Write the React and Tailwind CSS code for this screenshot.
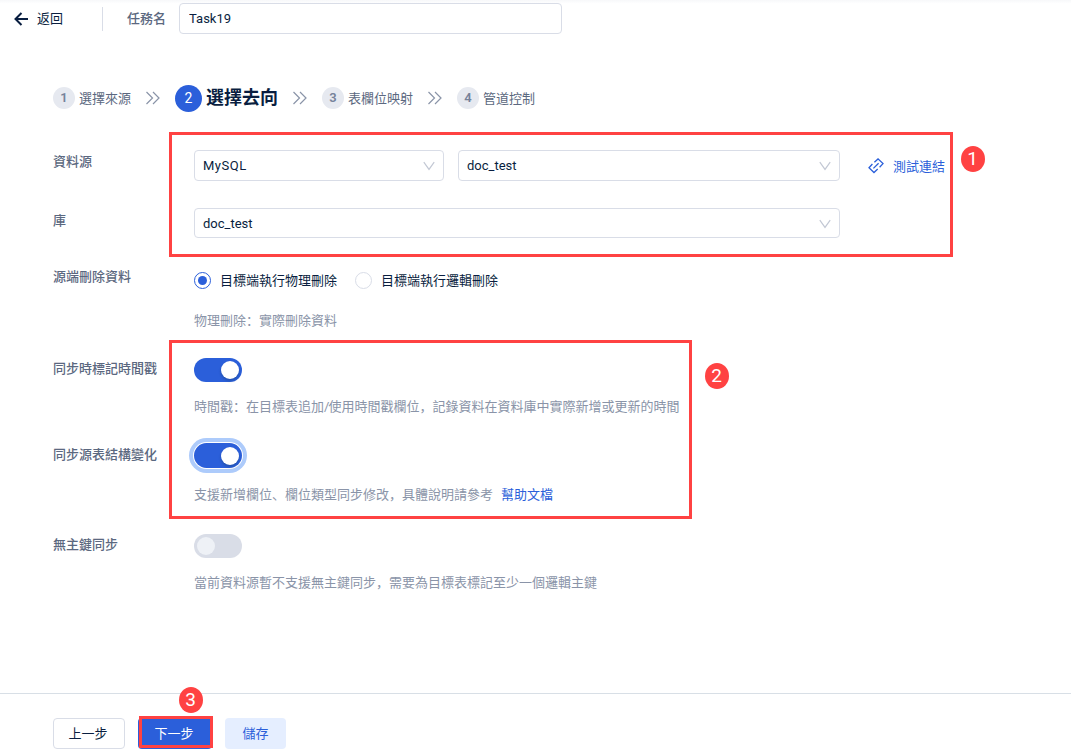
import { useState } from "react";
import clsx from "clsx";

const STEPS = [
  { id: 1, title: "選擇來源" },
  { id: 2, title: "選擇去向" },
  { id: 3, title: "表欄位映射" },
  { id: 4, title: "管道控制" },
];

const ArrowLeft = () => (
  <svg width="15" height="14" viewBox="0 0 15 14" fill="none" stroke="#091e40" strokeWidth="2">
    <path d="M7.5 1 1.5 7l6 6M1.5 7H14" />
  </svg>
);

const DoubleChevron = () => (
  <svg width="16" height="14" viewBox="0 0 16 14" fill="none" stroke="#8a94a8" strokeWidth="1.2">
    <path d="M1.5 1 7.5 7l-6 6M8 1l6 6-6 6" />
  </svg>
);

const ChevronDown = () => (
  <svg width="12" height="10" viewBox="0 0 12 10" fill="none" stroke="#c3c8d4" strokeWidth="1.2">
    <path d="M.8 1.2 6 8.4l5.2-7.2" />
  </svg>
);

const LinkIcon = () => (
  <svg width="16" height="16" viewBox="0 0 16 16" fill="none" stroke="#2b5fda" strokeWidth="1.3">
    <path d="M6.4 4.2 10 .9l5 4.7-3.4 3.6M4.4 6 1 9.8l5 4.7 3.7-3.4M5.4 10.4l5.2-5.2" />
  </svg>
);

/* =========================
   Form controls
========================= */
const Select = ({ value, className }) => (
  <div
    className={clsx(
      "flex items-center justify-between rounded border border-[#d9dde7] bg-white pl-2 pr-2 text-[13px] text-[#091e40]",
      className,
    )}
  >
    <span>{value}</span>
    <ChevronDown />
  </div>
);

const Radio = ({ checked, label, onClick }) => (
  <button className="flex items-center gap-[9px]" onClick={onClick}>
    <span
      className={clsx(
        "flex size-[17px] items-center justify-center rounded-full border",
        checked ? "border-[#2b5fda]" : "border-[#d9dde7]",
      )}
    >
      {checked && <span className="size-[9px] rounded-full bg-[#2b5fda]" />}
    </span>
    <span className="pt-px text-[13px] leading-5 text-[#091e40]">{label}</span>
  </button>
);

const Switch = ({ checked, focused, disabled, onClick }) => (
  <button
    disabled={disabled}
    onClick={onClick}
    className={clsx(
      "flex w-12 items-center rounded-full px-[3px]",
      checked ? "justify-end bg-[#2b5fda]" : "justify-start bg-[#d9dde7]",
      focused
        ? "h-[25px] shadow-[0_0_0_1px_#fff,0_0_0_5px_#adcbfb]"
        : "h-6",
    )}
  >
    <span
      className={clsx(
        "size-[18px] rounded-full",
        disabled ? "bg-[#eef1f6]" : "bg-white shadow-[0_2px_3px_rgba(0,35,11,0.2)]",
      )}
    />
  </button>
);

const Row = ({ label, className, labelClassName, children }) => (
  <div className={clsx("flex items-start", className)}>
    <div className={clsx("w-[141px] shrink-0 text-[13px] font-medium leading-5 text-[#5b6880]", labelClassName)}>
      {label}
    </div>
    <div>{children}</div>
  </div>
);

const Hint = ({ className, children }) => (
  <p className={clsx("whitespace-nowrap text-[13px] leading-5 text-[#8a94a8]", className)}>{children}</p>
);

// Numbered callout pinned over the form
const Marker = ({ number, className }) => (
  <span
    className={clsx(
      "absolute flex h-[26px] w-[24px] items-center justify-center rounded-[50%] bg-[#ff4242] text-[19px] leading-none text-white",
      className,
    )}
  >
    {number}
  </span>
);

const Stepper = ({ current }) => (
  <div className="flex h-7 items-center pl-[53px]">
    {STEPS.map((step, index) => {
      const active = step.id === current;
      return (
        <div key={step.id} className="flex items-center">
          <span
            className={clsx(
              "flex items-center justify-center rounded-full",
              active
                ? "size-[27px] bg-[#2b5fda] text-[14px] text-white"
                : "size-[22px] bg-[#e6e9f0] text-[13px] font-semibold text-[#76829a]",
            )}
          >
            {step.id}
          </span>
          <span
            className={clsx(
              "ml-1 leading-6",
              active ? "text-[18px] font-bold text-[#091e40]" : "pt-px text-[13px] text-[#5b6880]",
            )}
          >
            {step.title}
          </span>
          {index < STEPS.length - 1 && (
            <span className="mx-3.5">
              <DoubleChevron />
            </span>
          )}
        </div>
      );
    })}
  </div>
);

const App = () => {
  const [deleteMode, setDeleteMode] = useState("physical");
  const [timestamp, setTimestamp] = useState(true);
  const [syncStructure, setSyncStructure] = useState(true);

  return (
    <div className="relative flex h-[755px] w-[1071px] flex-col overflow-hidden bg-white font-[Roboto,'Noto_Sans_CJK_SC',sans-serif]">
      {/* Header */}
      <header className="flex h-[37px] items-center bg-linear-to-b from-[#f7f8fa] to-white to-10% pl-3.5">
        <button className="flex items-center gap-2 text-[13px] text-[#091e40]">
          <ArrowLeft />
          返回
        </button>
        <div className="ml-[39px] h-6 w-px bg-[#d9dde7]" />
        <label className="ml-6 text-[13px] font-medium text-[#5b6880]" htmlFor="task">
          任務名
        </label>
        <input
          id="task"
          defaultValue="Task19"
          className="ml-[13px] h-[31px] w-[383px] rounded border border-[#d9dde7] bg-white px-[9px] text-[13px] text-[#091e40] outline-none"
        />
      </header>

      <div className="mt-[47px]">
        <Stepper current={2} />
      </div>

      {/* Target settings */}
      <main className="mt-[38px] flex-1 pl-[53px]">
        <Row label="資料源" labelClassName="mt-0.5" className="h-[58px]">
          <div className="flex items-center">
            <Select value="MySQL" className="h-[31px] w-[250px] tracking-[0.5px]" />
            <Select value="doc_test" className="ml-3.5 h-[31px] w-[382px]" />
            <button className="ml-7 flex items-center gap-[9px] text-[13px] text-[#2b5fda]">
              <LinkIcon />
              <span className="pt-0.5">測試連結</span>
            </button>
          </div>
        </Row>
        <Row label="庫" labelClassName="mt-[3px]" className="h-[57px]">
          <Select value="doc_test" className="h-[30px] w-[646px] pt-px" />
        </Row>
        <Row label="源端刪除資料" labelClassName="mt-0.5" className="h-[93px]">
          <div className="flex h-[30px] items-center gap-[18px]">
            <Radio
              checked={deleteMode === "physical"}
              label="目標端執行物理刪除"
              onClick={() => setDeleteMode("physical")}
            />
            <Radio
              checked={deleteMode === "logical"}
              label="目標端執行邏輯刪除"
              onClick={() => setDeleteMode("logical")}
            />
          </div>
          <Hint className="mt-4">物理刪除：實際刪除資料</Hint>
        </Row>
        <Row label="同步時標記時間戳" labelClassName="mt-px" className="h-[85px]">
          <Switch checked={timestamp} onClick={() => setTimestamp(!timestamp)} />
          <Hint className="mt-[15px]">
            時間戳：在目標表追加<span className="-mr-px">/</span>使用時間戳欄位，記錄資料在資料庫中實際新增或更新的時間
          </Hint>
        </Row>
        <Row label="同步源表結構變化" labelClassName="mt-0.5" className="h-[91px]">
          <Switch checked={syncStructure} focused onClick={() => setSyncStructure(!syncStructure)} />
          <Hint className="mt-[17px]">
            支援新增欄位、欄位類型同步修改，具體說明請參考
            <a className="ml-2 text-[#2b5fda]">幫助文檔</a>
          </Hint>
        </Row>
        <Row label="無主鍵同步" labelClassName="mt-px">
          <Switch disabled />
          <Hint className="mt-[15px]">當前資料源暫不支援無主鍵同步，需要為目標表標記至少一個邏輯主鍵</Hint>
        </Row>
      </main>

      {/* Footer */}
      <footer className="flex h-[62px] items-start border-t border-[#d8dfe6] pl-[53px] pt-6 text-[13px]">
        <button className="h-[31px] w-[72px] rounded border border-[#d9dde7] bg-white pr-0.5 text-[#091e40]">上一步</button>
        <button className="ml-[13px] h-[31px] w-[74px] rounded bg-[#2b5fda] pr-0.5 text-white">下一步</button>
        <button className="ml-[13px] h-[31px] w-[61px] rounded bg-[#e5eeff] text-[#2b5fda]">儲存</button>
      </footer>

      {/* Callouts */}
      <div className="pointer-events-none absolute left-[169px] top-[132px] h-[125px] w-[784px] border-3 border-[#ff4242]" />
      <div className="pointer-events-none absolute left-[169px] top-[340px] h-[179px] w-[523px] border-3 border-[#ff4242]" />
      <div className="pointer-events-none absolute left-[139px] top-[716px] h-[32px] w-[74px] border-3 border-[#ff4242]" />
      <Marker number={1} className="left-[960.5px] top-[145.5px]" />
      <Marker number={2} className="left-[704.5px] top-[362.5px]" />
      <Marker number={3} className="left-[178.5px] top-[686.5px]" />
    </div>
  );
};

export default App;
